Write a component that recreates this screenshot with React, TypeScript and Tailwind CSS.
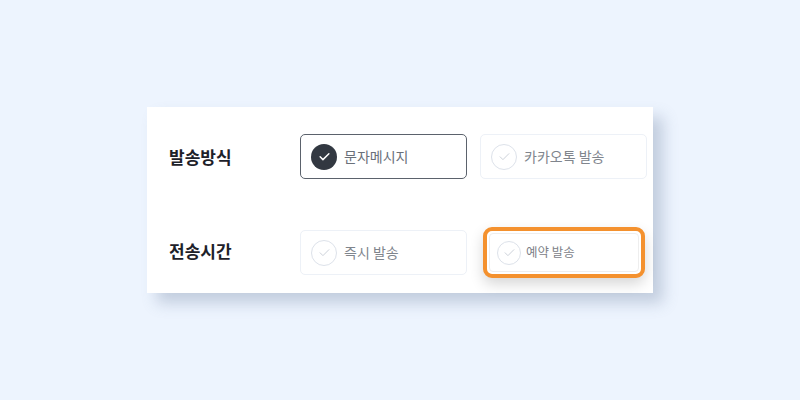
import React, { useState } from 'react';

const font = { fontFamily: '"Noto Sans CJK KR", "Noto Sans", sans-serif' };

const CheckIcon: React.FC<{ checked: boolean; size?: string }> = ({ checked, size = 'w-[26px] h-[26px]' }) => (
   <span
      className={`${size} shrink-0 rounded-full flex items-center justify-center ${checked ? 'bg-[#323841]' : 'border border-[#dde2ea] bg-white'}`}
   >
      <svg viewBox="0 0 24 24" className="w-[15px] h-[15px]" fill="none" stroke={checked ? '#ffffff' : '#c9ced6'} strokeWidth={checked ? 2.3 : 1.5} strokeLinecap="round" strokeLinejoin="round">
         <path d="M5 12.5l4.5 4.5L19 7.5" />
      </svg>
   </span>
);

const Option: React.FC<{ label: string; checked: boolean; onClick: () => void }> = ({ label, checked, onClick }) => (
   <button
      onClick={onClick}
      className={`w-[167px] h-[45px] flex items-center gap-[7px] pl-[10px] rounded-[5px] bg-white text-left ${checked ? 'border border-[#5b626c]' : 'border border-[#edf1f7]'}`}
   >
      <CheckIcon checked={checked} />
      <span className={`text-[14px] ${checked ? 'text-[#6a7079]' : 'text-[#80858d]'}`}>{label}</span>
   </button>
);

export default function App() {
   const [method, setMethod] = useState('sms');

   return (
      <div className="w-[800px] h-[400px] bg-[#edf4fe] pt-[107px] pl-[147px]" style={font}>
         {/* Card */}
         <div className="w-[506px] h-[186px] bg-white shadow-[10px_10px_14px_rgba(95,115,150,0.3)] pt-[27px] pl-[22px] flex flex-col gap-[48px]">
            {/* 발송방식 */}
            <div className="flex items-center">
               <span className="w-[131px] text-[17px] font-bold text-[#1d2129]">발송방식</span>
               <div className="flex gap-[13px]">
                  <Option label="문자메시지" checked={method === 'sms'} onClick={() => setMethod('sms')} />
                  <Option label="카카오톡 발송" checked={method === 'kakao'} onClick={() => setMethod('kakao')} />
               </div>
            </div>

            {/* 전송시간 */}
            <div className="flex items-center h-[51px]">
               <span className="w-[131px] text-[17px] font-bold text-[#1d2129] -mt-[4px]">전송시간</span>
               <div className="flex items-center gap-[16px]">
                  <button className="w-[167px] h-[45px] flex items-center gap-[7px] pl-[10px] rounded-[5px] bg-white border border-[#edf1f7]">
                     <CheckIcon checked={false} />
                     <span className="text-[14px] text-[#80858d]">즉시 발송</span>
                  </button>
                  <div className="w-[162px] h-[51px] rounded-[9px] border-[4px] border-[#f4912e] p-[2px] bg-white shadow-[0_6px_14px_rgba(0,0,0,0.16)]">
                     <button className="w-full h-full flex items-center gap-[5px] pl-[7px] rounded-[4px] border border-[#eeeeee] bg-white">
                        <CheckIcon checked={false} size="w-[24px] h-[24px]" />
                        <span className="text-[12.5px] text-[#7d8188]">예약 발송</span>
                     </button>
                  </div>
               </div>
            </div>
         </div>
      </div>
   );
}
